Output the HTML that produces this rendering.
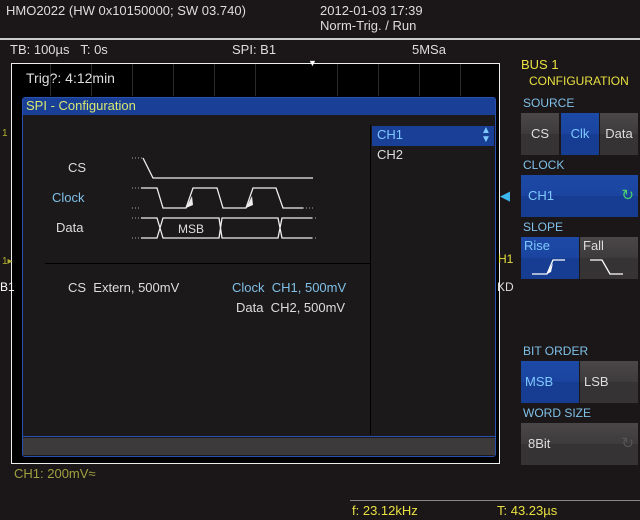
<!DOCTYPE html><html><head><style>
body{margin:0;width:640px;height:520px;background:#1b1718;font-family:"Liberation Sans",sans-serif;position:relative;overflow:hidden;color:#ddd;font-size:13px}
.a{position:absolute;white-space:nowrap}
.btn{position:absolute;background:linear-gradient(#4a4748 0,#3e3b3c 50%,#363334 50%,#363334 100%);color:#ddd;font-size:13px}
.sel{background:linear-gradient(#1d4aa6 0,#1a44a0 50%,#163d92 50%,#163d92 100%);color:#7fc8ff}
.lbl{position:absolute;color:#7fc0e8;font-size:12px}
</style></head><body>
<div class="a" style="left:6px;top:3px;color:#ddd">HMO2022 (HW 0x10150000; SW 03.740)</div>
<div class="a" style="left:320px;top:3px">2012-01-03 17:39</div>
<div class="a" style="left:320px;top:18px">Norm-Trig. / Run</div>
<div class="a" style="left:0;top:38px;width:640px;height:2px;background:#ccc"></div>
<div class="a" style="left:10px;top:42px">TB: 100µs &nbsp;&nbsp;T: 0s</div>
<div class="a" style="left:232px;top:42px">SPI: B1</div>
<div class="a" style="left:412px;top:42px">5MSa</div>
<div class="a" style="left:11px;top:63px;width:487px;height:399px;border:1px solid #eee;background:#000"></div>
<div class="a" style="left:50px;top:64px;width:1px;height:32px;background:#2a2a2a;box-shadow:41px 0 #2a2a2a,82px 0 #2a2a2a,123px 0 #2a2a2a,164px 0 #2a2a2a,205px 0 #2a2a2a,287px 0 #2a2a2a,328px 0 #2a2a2a,369px 0 #2a2a2a,410px 0 #2a2a2a"></div>
<div class="a" style="left:308px;top:58px;color:#fff;font-size:9px">▼</div>
<div class="a" style="left:26px;top:70px;font-size:14px;color:#ddd">Trig?: 4:12min</div>
<div class="a" style="left:22px;top:97px;width:472px;height:358px;border:1px solid #2a50b0;border-radius:3px;background:#1c191a"></div>
<div class="a" style="left:23px;top:98px;width:472px;height:17px;background:#1a3f96"></div>
<div class="a" style="left:26px;top:98px;color:#d8e870;font-size:13px">SPI - Configuration</div>
<div class="a" style="left:23px;top:438px;width:472px;height:17px;background:#3c3a3b"></div>
<div class="a" style="left:23px;top:436px;width:472px;height:1px;background:#2a50b0"></div>
<div class="a" style="left:370px;top:125px;width:1px;height:310px;background:#000"></div>
<div class="a" style="left:45px;top:263px;width:325px;height:1px;background:#000"></div>
<div class="a" style="left:372px;top:126px;width:122px;height:20px;background:#1a3f96"></div>
<div class="a" style="left:377px;top:127px;color:#7fc8ff">CH1</div>
<div class="a" style="left:481px;top:126px;color:#7fc8ff;font-size:10px;line-height:9px">▲<br>▼</div>
<div class="a" style="left:377px;top:147px;color:#ddd">CH2</div>
<div class="a" style="left:68px;top:160px">CS</div>
<div class="a" style="left:52px;top:190px;color:#7fc0e8">Clock</div>
<div class="a" style="left:56px;top:220px">Data</div>
<svg class="a" style="left:130px;top:150px" width="190" height="95"><g stroke="#eee" stroke-width="1.3" fill="none">
<path d="M13 8L23 28H183"/>
<path d="M11 38H27L33 58H56L63 38H87L93 58H116L123 38H146L153 58H173"/>
<path d="M11 68H27L33 88H89L92 68H148L152 88H182M11 88H27L33 68H89L92 88H148L152 68H182"/>
</g><g stroke="#aaa" stroke-width="1" stroke-dasharray="1 2" fill="none">
<path d="M2 8H12M2 38H10M2 58H10M2 68H10M2 88H10M173 58H183M182 68H187M182 88H187"/></g>
<g fill="#eee"><path d="M56 58L62 46L63 55Z"/><path d="M116 58L122 46L123 55Z"/></g>
<text x="61" y="83" text-anchor="middle" fill="#ddd" font-family="Liberation Sans" font-size="12">MSB</text></svg>
<div class="a" style="left:68px;top:280px">CS &nbsp;Extern, 500mV</div>
<div class="a" style="left:232px;top:280px;color:#7fc0e8">Clock &nbsp;CH1, 500mV</div>
<div class="a" style="left:236px;top:300px">Data &nbsp;CH2, 500mV</div>
<div class="a" style="left:500px;top:188px;color:#3cb8f0;font-size:13px">◀</div>
<div class="a" style="left:498px;top:252px;color:#e8e040;font-size:12px">H1</div>
<div class="a" style="left:497px;top:280px;font-size:12px">KD</div>
<div class="a" style="left:0;top:280px;font-size:12px;color:#fff">B1</div>
<div class="a" style="left:2px;top:128px;color:#b0b030;font-size:10px">1</div>
<div class="a" style="left:2px;top:256px;color:#b0b030;font-size:10px">1▸</div>
<div class="a" style="left:14px;top:466px;color:#a0a040">CH1: 200mV≈</div>
<div class="a" style="left:350px;top:500px;width:290px;height:1px;background:#888"></div>
<div class="a" style="left:352px;top:503px;color:#e8e040">f: 23.12kHz</div>
<div class="a" style="left:497px;top:503px;color:#e8e040">T: 43.23µs</div>
<div class="a" style="left:521px;top:57px;color:#e8e040;font-size:13px">BUS 1</div>
<div class="a" style="left:529px;top:74px;color:#e8e040;font-size:12px">CONFIGURATION</div>
<div class="lbl" style="left:523px;top:96px">SOURCE</div>
<div class="btn" style="left:521px;top:113px;width:38px;height:42px;line-height:42px;text-align:center">CS</div>
<div class="btn sel" style="left:561px;top:113px;width:38px;height:42px;line-height:42px;text-align:center">Clk</div>
<div class="btn" style="left:600px;top:113px;width:38px;height:42px;line-height:42px;text-align:center">Data</div>
<div class="lbl" style="left:523px;top:158px">CLOCK</div>
<div class="btn sel" style="left:521px;top:175px;width:117px;height:42px;line-height:42px;padding-left:7px;box-sizing:border-box">CH1<span style="position:absolute;right:4px;color:#4cd070;font-size:15px">↻</span></div>
<div class="lbl" style="left:523px;top:220px">SLOPE</div>
<div class="btn sel" style="left:521px;top:237px;width:58px;height:42px"><span class="a" style="left:3px;top:1px">Rise</span><svg class="a" style="left:6px;top:20px" width="50" height="20"><path d="M5 17H20L26 3H38" stroke="#fff" fill="none" stroke-width="1.3"/><path d="M20 17L26 6L24 15Z" fill="#fff"/></svg></div>
<div class="btn" style="left:580px;top:237px;width:58px;height:42px"><span class="a" style="left:3px;top:1px">Fall</span><svg class="a" style="left:0;top:20px" width="58" height="20"><path d="M10 3H22L30 17H43" stroke="#fff" fill="none" stroke-width="1.3"/></svg></div>
<div class="lbl" style="left:523px;top:344px">BIT ORDER</div>
<div class="btn sel" style="left:521px;top:361px;width:58px;height:42px;line-height:42px;padding-left:4px;box-sizing:border-box">MSB</div>
<div class="btn" style="left:580px;top:361px;width:58px;height:42px;line-height:42px;padding-left:4px;box-sizing:border-box">LSB</div>
<div class="lbl" style="left:523px;top:406px">WORD SIZE</div>
<div class="btn" style="left:521px;top:423px;width:117px;height:42px;line-height:42px;padding-left:7px;box-sizing:border-box">8Bit<span style="position:absolute;right:4px;color:#555;font-size:15px">↻</span></div>
</body></html>
